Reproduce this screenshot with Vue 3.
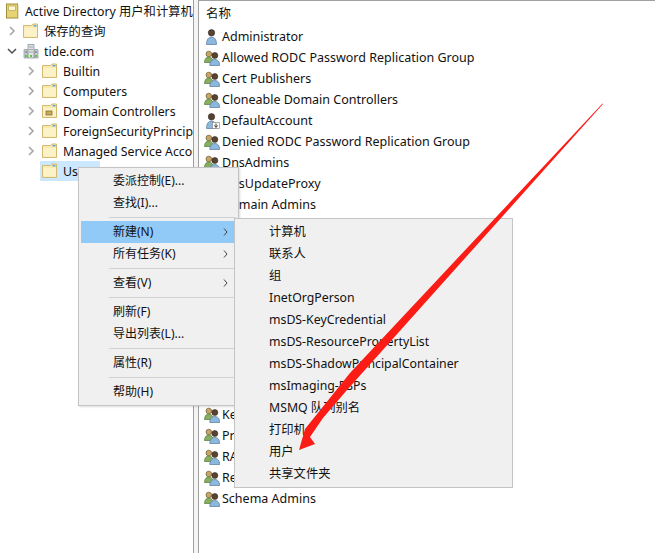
<script setup>
const tree = [
  { label: '保存的查询', chevron: 'right', depth: 0, icon: 'folder' },
  { label: 'tide.com', chevron: 'down', depth: 0, icon: 'domain' },
  { label: 'Builtin', chevron: 'right', depth: 1, icon: 'folder' },
  { label: 'Computers', chevron: 'right', depth: 1, icon: 'folder' },
  { label: 'Domain Controllers', chevron: 'right', depth: 1, icon: 'ou' },
  { label: 'ForeignSecurityPrincipals', chevron: 'right', depth: 1, icon: 'folder' },
  { label: 'Managed Service Accounts', chevron: 'right', depth: 1, icon: 'folder' },
  { label: 'Users', chevron: '', depth: 1, icon: 'folder', selected: true },
]
const rows = [
  ['Administrator', 'user'],
  ['Allowed RODC Password Replication Group', 'group'],
  ['Cert Publishers', 'group'],
  ['Cloneable Domain Controllers', 'group'],
  ['DefaultAccount', 'disabled'],
  ['Denied RODC Password Replication Group', 'group'],
  ['DnsAdmins', 'group'],
  ['DnsUpdateProxy', 'group'],
  ['Domain Admins', 'group'],
  ['Domain Computers', 'group'],
  ['Domain Controllers', 'group'],
  ['Domain Guests', 'group'],
  ['Domain Users', 'group'],
  ['Enterprise Admins', 'group'],
  ['Enterprise Key Admins', 'group'],
  ['Enterprise Read-only Domain Controllers', 'group'],
  ['Group Policy Creator Owners', 'group'],
  ['Guest', 'user'],
  ['Key Admins', 'group'],
  ['Protected Users', 'group'],
  ['RAS and IAS Servers', 'group'],
  ['Read-only Domain Controllers', 'group'],
  ['Schema Admins', 'group'],
]
const menu = [
  { t: '委派控制(E)...' }, { t: '查找(I)...' }, { sep: true },
  { t: '新建(N)', sub: true, active: true }, { t: '所有任务(K)', sub: true }, { sep: true },
  { t: '查看(V)', sub: true }, { sep: true },
  { t: '刷新(F)' }, { t: '导出列表(L)...' }, { sep: true },
  { t: '属性(R)' }, { sep: true }, { t: '帮助(H)' },
]
const submenu = ['计算机', '联系人', '组', 'InetOrgPerson', 'msDS-KeyCredential', 'msDS-ResourcePropertyList',
  'msDS-ShadowPrincipalContainer', 'msImaging-PSPs', 'MSMQ 队列别名', '打印机', '用户', '共享文件夹']
</script>

<template>
  <div class="window">
    <aside class="tree">
      <div class="tree-title">
        <svg class="ico" viewBox="0 0 16 16"><rect x="1.500" y="1" width="11" height="14" fill="#e6d372" stroke="#a08e3c"/><rect x="3.500" y="3" width="7" height="4.500" fill="#fbf6cf" stroke="#b7a658" stroke-width=".7"/><path d="M13 2v14H2" fill="none" stroke="#c9c3a0"/></svg>
        <span class="clip">Active Directory 用户和计算机</span>
      </div>
      <div v-for="n in tree" :key="n.label" class="node" :class="{ indented: n.depth }">
        <span class="twisty">
          <svg v-if="n.chevron === 'right'" viewBox="0 0 10 10"><path d="M3 1l4 4-4 4" fill="none" stroke="#a6a6a6" stroke-width="1.600"/></svg>
          <svg v-else-if="n.chevron === 'down'" viewBox="0 0 10 10"><path d="M1 3l4 4 4-4" fill="none" stroke="#4d4d4d" stroke-width="1.500"/></svg>
        </span>
        <span class="node-body" :class="{ selected: n.selected }">
          <svg v-if="n.icon === 'domain'" class="ico" viewBox="0 0 16 16"><path d="M1 6.500h4V15H1zM11 6.500h4V15h-4z" fill="#c7cdd1" stroke="#8b959b" stroke-width=".7"/><path d="M5 1.500h6V15H5z" fill="#dfe3e6" stroke="#7c868c" stroke-width=".7"/><path d="M6.500 3.500h1v1h-1zM8.500 3.500h1v1h-1zM6.500 6h1v1h-1zM8.500 6h1v1h-1zM6.500 8.500h1v1h-1zM8.500 8.500h1v1h-1zM2 8.500h2v1H2zM12 8.500h2v1h-2z" fill="#626c72"/><path d="M2 12h2v2H2zM12 12h2v2h-2zM7 12h2v2H7z" fill="#5cc63e"/></svg>
          <svg v-else class="ico" viewBox="0 0 16 16"><path d="M.5 14.500V2.500h8l1.500-1.500h4.500v13.500z" fill="#f8eab0" stroke="#d4b970"/><path d="M1.500 13.500V5h12.500v8.500z" fill="#fbf2c8"/><path d="M10.500 2h3v1.500h-3z" fill="#58a8d8"/><rect v-if="n.icon === 'ou'" x="4" y="8" width="6" height="4" fill="#c9a95a" stroke="#7a6a30" stroke-width=".7"/></svg>
          <span class="node-label">{{ n.label }}</span>
        </span>
      </div>
    </aside>
    <div class="split"></div>
    <main class="list">
      <div class="head">名称</div>
      <div v-for="r in rows" :key="r[0]" class="row">
        <svg class="ico" viewBox="0 0 16 16">
          <template v-if="r[1] === 'group'">
            <circle cx="4.800" cy="4" r="2.800" fill="#c8a468" stroke="#6c5a30" stroke-width=".7"/>
            <path d="M.5 12.500c0-3.500 1.800-5.500 4.300-5.500s4.300 2 4.300 5.500z" fill="#86ae5e" stroke="#4f7a38" stroke-width=".7"/>
            <circle cx="10.800" cy="5.500" r="3" fill="#5a4230" stroke="#332a22" stroke-width=".6"/>
            <path d="M5.800 15.500c0-4 2-6 5-6s4.800 2 4.800 6z" fill="#8db8de" stroke="#54789e" stroke-width=".7"/>
          </template>
          <template v-else>
            <circle cx="7.500" cy="3.800" r="3.200" fill="#5a4230" stroke="#332a22" stroke-width=".6"/>
            <path d="M2.500 15.500c0-5 2-7.500 5-7.500s5 2.500 5 7.500z" fill="#8db8de" stroke="#54789e" stroke-width=".7"/>
            <template v-if="r[1] === 'disabled'">
              <rect x="8.500" y="9.500" width="7" height="6" fill="#fff" stroke="#8a8a8a" stroke-width=".7"/>
              <path d="M12 10.500v3M10.500 12.500L12 14.500l1.500-2" fill="none" stroke="#333" stroke-width="1"/>
            </template>
          </template>
        </svg>
        <span>{{ r[0] }}</span>
      </div>
    </main>

    <div class="menu">
      <template v-for="(m, i) in menu" :key="i">
        <div v-if="m.sep" class="sep"></div>
        <div v-else class="item" :class="{ active: m.active }">
          <span>{{ m.t }}</span>
          <svg v-if="m.sub" class="caret" viewBox="0 0 5 8"><path d="M1 .5l3 3.500-3 3.500" fill="none" stroke="#444" stroke-width="1"/></svg>
        </div>
      </template>
    </div>
    <div class="submenu">
      <div v-for="s in submenu" :key="s" class="sub-item">{{ s }}</div>
    </div>
    <svg class="arrow" viewBox="0 0 655 553">
      <path d="M603 104 L347 390 L323 418 L310 437 L315 444 L299 450 L305 429 L350 373 L602.500 103.500Z" fill="#fb1c16"/>
    </svg>
  </div>
</template>

<style>
body { margin: 0; background: #fff; }
</style>
<style scoped>
.window {
  position: relative; display: flex; width: 655px; height: 553px; overflow: hidden; background: #fff;
  font-family: "Noto Sans", "Noto Sans CJK SC", sans-serif; font-size: 12.5px; color: #111;
}
.tree { width: 193px; flex: none; overflow: hidden; white-space: nowrap; padding-top: 1px; box-sizing: border-box; font-size: 12.3px; }
.tree-title { display: flex; align-items: center; gap: 4px; height: 20px; padding-left: 5px; }
.clip { overflow: hidden; }
.ico { width: 16px; height: 16px; flex: none; }
.node { display: flex; align-items: center; height: 20px; padding-left: 7px; }
.node.indented { padding-left: 26px; }
.twisty { width: 10px; height: 10px; margin-right: 4px; flex: none; display: flex; }
.node-body { display: flex; align-items: center; gap: 5px; height: 20px; padding: 0 2px; box-sizing: border-box; }
.node-body.selected { background: #cce8ff; width: 60px; }
.node-label { white-space: nowrap; }
.split { width: 6px; flex: none; border-left: 1px solid #a0a0a0; border-right: 1px solid #a0a0a0; box-sizing: border-box; background: #f4f4f4; }
.list { flex: 1; min-width: 0; border-top: 1px solid #a0a0a0; padding-left: 5px; box-sizing: border-box; white-space: nowrap; }
.head { height: 25px; line-height: 25px; padding-left: 2px; }
.row { display: flex; align-items: center; gap: 2px; height: 21px; }
.menu {
  position: absolute; left: 78px; top: 167px; width: 161px; box-sizing: border-box; padding: 2px;
  background: #f0f0f0; border: 1px solid #c4c4c4; box-shadow: 1px 1px 2px rgba(0,0,0,.15); font-size: 12px;
}
.item { position: relative; height: 22px; line-height: 22px; padding-left: 32px; }
.item.active { background: #91c9f7; }
.caret { position: absolute; left: 142px; top: 7px; width: 5px; height: 8px; }
.sep { height: 1px; margin: 3px 0 3px 28px; background: #d2d2d2; }
.submenu {
  position: absolute; left: 234px; top: 218px; width: 279px; box-sizing: border-box; padding: 2px;
  background: #f0f0f0; border: 1px solid #c4c4c4; font-size: 12.3px;
}
.sub-item { height: 22px; line-height: 22px; padding-left: 32px; white-space: nowrap; }
.arrow { position: absolute; left: 0; top: 0; width: 655px; height: 553px; pointer-events: none; }
</style>
